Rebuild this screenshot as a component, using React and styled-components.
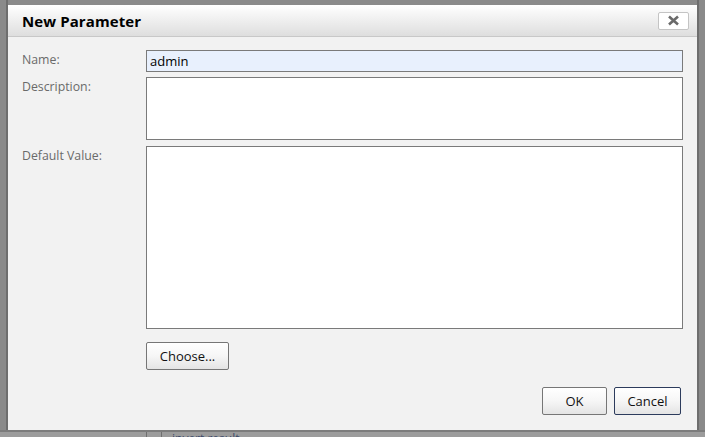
import React, { useState } from "react";
import styled, { createGlobalStyle } from "styled-components";

const GlobalStyle = createGlobalStyle`
  html, body {
    margin: 0;
    padding: 0;
    width: 705px;
    height: 437px;
    overflow: hidden;
    background-color: #8a8a8a;
    font-family: "Open Sans", "Liberation Sans", sans-serif;
  }
`;

const Page = styled.div`
  width: 705px;
  height: 437px;
  display: flex;
  flex-direction: column;
  box-sizing: border-box;
  padding-top: 5px;
  background: linear-gradient(to right, #8a8a8a 0, #8a8a8a 6px, #6e6e6e 6px, #6e6e6e 8px, #8a8a8a 8px, #8a8a8a 697px, #6e6e6e 697px, #6e6e6e 699px, #8a8a8a 699px);
`;

const Dialog = styled.div`
  margin-left: 8px;
  width: 689px;
  height: 425px;
  display: flex;
  flex-direction: column;
  background-color: #f2f2f2;
  flex-shrink: 0;
`;

const Header = styled.div`
  height: 31px;
  display: flex;
  align-items: center;
  justify-content: space-between;
  padding: 0 8px 0 14px;
  background: linear-gradient(to bottom, #ffffff, #dedede);
  border-bottom: 1px solid #c8c8c8;
`;

const Title = styled.div`
  font-size: 15px;
  font-weight: 700;
  color: #000;
  letter-spacing: 0.1px;
`;

const CloseButton = styled.button`
  width: 31px;
  height: 18px;
  padding: 0;
  display: flex;
  align-items: center;
  justify-content: center;
  background: #fff;
  border: 1px solid #c4c4c4;
  border-radius: 2px;
`;

const Body = styled.div`
  flex: 1;
  display: flex;
  flex-direction: column;
  padding: 13px 14px 15px 14px;
`;

const Form = styled.div`
  display: grid;
  grid-template-columns: 124px 1fr;
  row-gap: 5px;
`;

const Label = styled.label`
  font-size: 12.3px;
  line-height: 16px;
  padding-top: ${(p) => 2 + (p.$mt || 0)}px;
  color: #6a6a6a;
`;

const TextInput = styled.input`
  box-sizing: border-box;
  height: 22px;
  width: 100%;
  margin: 0;
  padding: 0 3px;
  border: 1px solid #7a7a7a;
  background-color: ${(p) => (p.$filled ? "#e8f0fd" : "#fff")};
  font-family: "Open Sans", "Liberation Sans", sans-serif;
  font-size: 13px;
  color: #000;
  outline: none;
`;

const TextArea = styled.textarea`
  box-sizing: border-box;
  display: block;
  width: 100%;
  height: ${(p) => p.$h}px;
  margin: ${(p) => p.$mt || 0}px 0 0 0;
  padding: 3px;
  border: 1px solid #7a7a7a;
  background: #fff;
  resize: none;
  font-family: "Open Sans", "Liberation Sans", sans-serif;
  font-size: 13px;
  outline: none;
`;

const Button = styled.button`
  box-sizing: border-box;
  height: ${(p) => p.$h || 28}px;
  width: ${(p) => p.$w}px;
  padding: 0;
  background: linear-gradient(to bottom, #ffffff 0%, #f6f6f6 50%, #e4e4e4 100%);
  border: 1px solid ${(p) => (p.$focus ? "#2c3b5c" : "#767676")};
  border-radius: 2px;
  font-family: "Open Sans", "Liberation Sans", sans-serif;
  font-size: 13px;
  color: #111;
`;

const ChooseRow = styled.div`
  margin-top: 13px;
  padding-left: 124px;
`;

const Footer = styled.div`
  margin-top: auto;
  display: flex;
  justify-content: flex-end;
  gap: 7px;
  padding-right: 2px;
`;

const Underlay = styled.div`
  flex: 1;
  display: flex;
  border-top: 2px solid #7c7c7c;
  background-color: #9c9c9c;
  overflow: hidden;
`;

const UnderCell = styled.div`
  width: ${(p) => p.$w}px;
  border-right: 1px solid #6f6f6f;
  flex-shrink: 0;
`;

const UnderText = styled.div`
  font-size: 12px;
  line-height: 12px;
  color: #3d4a6a;
  padding: 1px 0 0 10px;
`;

const App = () => {
  const [name, setName] = useState("admin");

  return (
    <>
      <GlobalStyle />
      <Page>
        <Dialog>
          <Header>
            <Title>New Parameter</Title>
            <CloseButton>
              <svg width="13" height="11" viewBox="0 0 13 11">
                <path d="M2 1.5 L11 9.5 M11 1.5 L2 9.5" stroke="#6a6a6a" strokeWidth="2.6" />
              </svg>
            </CloseButton>
          </Header>
          <Body>
            <Form>
              <Label>Name:</Label>
              <TextInput $filled value={name} onChange={(e) => setName(e.target.value)} />
              <Label>Description:</Label>
              <TextArea $h={63} />
              <Label $mt={1}>Default Value:</Label>
              <TextArea $h={183} $mt={1} />
            </Form>
            <ChooseRow>
              <Button $w={83} $h={28}>Choose...</Button>
            </ChooseRow>
            <Footer>
              <Button $w={65}>OK</Button>
              <Button $w={67} $focus>Cancel</Button>
            </Footer>
          </Body>
        </Dialog>
        <Underlay>
          <UnderCell $w={146} />
          <UnderCell $w={14} />
          <UnderText>invert result</UnderText>
        </Underlay>
      </Page>
    </>
  );
};

export default App;
